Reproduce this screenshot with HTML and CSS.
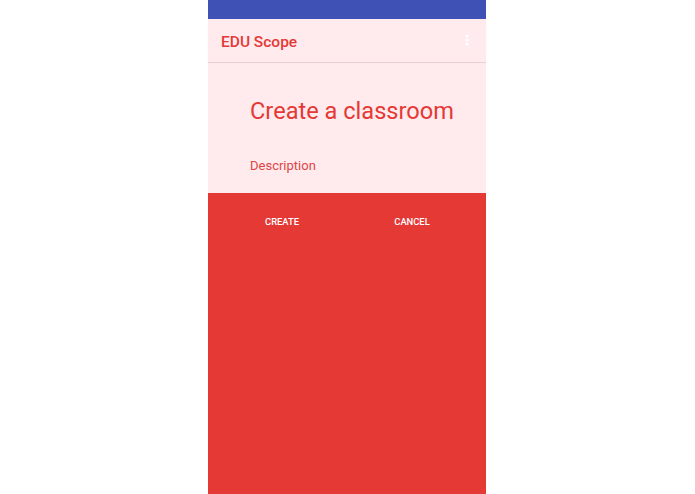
FILE: index.html
```html
<!DOCTYPE html>
<html lang="en">
<head>
  <meta charset="UTF-8">
  <meta name="viewport" content="width=device-width, initial-scale=1.0">
  <title>EDU Scope</title>
  <link rel="stylesheet" href="styles.css">
</head>
<body>
<div class="phone">
  <div class="status-bar"></div>
  <div class="app-bar">
    <span class="app-title">EDU Scope</span>
    <span class="overflow">
      <svg width="4" height="12" viewBox="0 0 4 12">
        <circle cx="2" cy="2" r="1.5" fill="#fff"/>
        <circle cx="2" cy="6" r="1.5" fill="#fff"/>
        <circle cx="2" cy="10" r="1.5" fill="#fff"/>
      </svg>
    </span>
  </div>
  <div class="form">
    <h1 class="heading">Create a classroom</h1>
    <div class="field">Description</div>
  </div>
  <div class="actions">
    <button type="button" class="btn">CREATE</button>
    <button type="button" class="btn">CANCEL</button>
  </div>
</div>
</body>
</html>
```

FILE: styles.css
```css
html, body {
  margin: 0;
  padding: 0;
  height: 100%;
  background: #fff;
  font-family: Roboto, "Noto Sans", sans-serif;
}
.phone {
  width: 278px;
  height: 494px;
  margin-left: 208px;
  display: flex;
  flex-direction: column;
  background: #e53935;
}
.status-bar {
  height: 19px;
  background: #3f51b5;
}
.app-bar {
  height: 43px;
  background: #ffebee;
  display: flex;
  align-items: center;
  justify-content: space-between;
  padding: 0 17px 0 13px;
  border-bottom: 1px solid #e8cfd2;
  box-shadow: 0 1px 1px rgba(0,0,0,0.06);
}
.app-title {
  color: #e53935;
  font-size: 15.5px;
  font-weight: 500;
  margin-top: 2px;
}
.overflow {
  display: flex;
  margin-top: -2px;
}
.form {
  background: #ffebee;
  height: 130px;
  padding-left: 42px;
}
.heading {
  margin: 33px 0 0;
  font-size: 23.6px;
  font-weight: 400;
  color: #e53935;
  line-height: 30px;
}
.field {
  margin-top: 32px;
  font-size: 13px;
  color: #e04545;
  line-height: 16px;
}
.actions {
  display: flex;
  justify-content: center;
  gap: 42px;
  padding-top: 20px;
}
.btn {
  width: 88px;
  background: none;
  border: none;
  color: #fff;
  font-family: Roboto, sans-serif;
  font-size: 9.4px;
  font-weight: 500;
  padding: 0;
  height: 16px;
}
```
